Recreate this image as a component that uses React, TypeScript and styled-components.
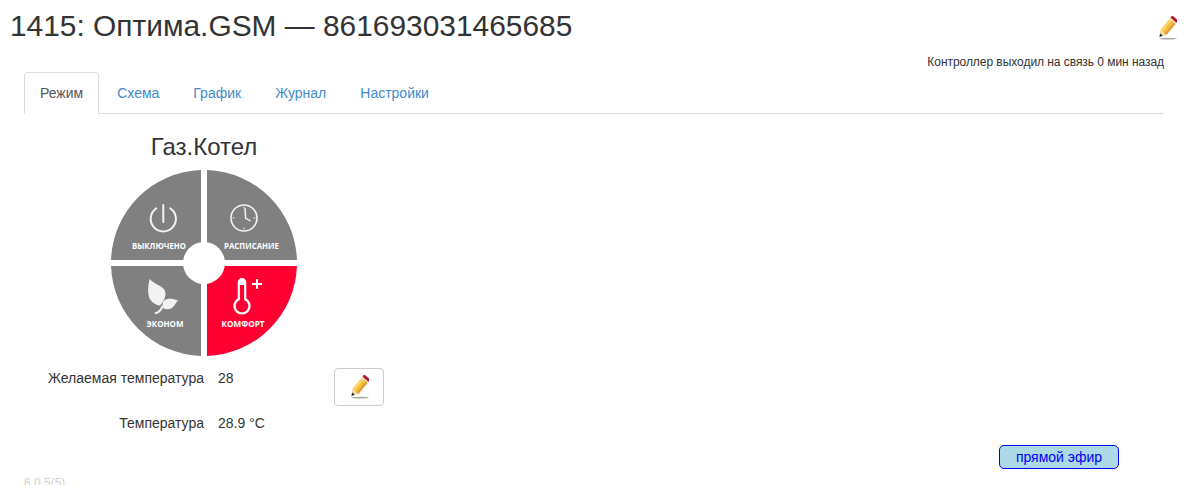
import styled, { createGlobalStyle } from "styled-components"

const GlobalStyle = createGlobalStyle`
    html, body {
        margin: 0;
        padding: 0;
        height: 100%;
        overflow: hidden;
        background: #fff;
    }
    body {
        font-family: "Liberation Sans", Arial, sans-serif;
        font-size: 14px;
        line-height: 20px;
        color: #333;
    }
`

const tabs = ['Режим', 'Схема', 'График', 'Журнал', 'Настройки']

function Pencil() {
    return (
        <PencilSvg viewBox="0 0 20 24">
            <ellipse cx="11" cy="22.600" rx="9" ry="0.900" fill="#a9a9a4" />
            <g transform="rotate(40 10 12)">
                <rect x="6" y="-1" width="8" height="3" rx="0.800" fill="#b3162c" />
                <rect x="6" y="2" width="8" height="1.400" fill="#e2dccb" />
                <path d="M6 3.400h2.600V18H6z" fill="#fbd66a" />
                <path d="M8.600 3.400h2.800V18H8.600z" fill="#f4bd3f" />
                <path d="M11.400 3.400H14V18h-2.600z" fill="#e0a02a" />
                <path d="M6 18h8l-4 5z" fill="#f0dcb4" />
                <path d="M8.200 20.700h3.600l-1.800 3z" fill="#1d1d1d" />
            </g>
        </PencilSvg>
    )
}

function Dial() {
    return (
        <DialSvg viewBox="0 0 186 186">
            <path d="M90 .05A93 93 0 0 0 .05 90H90Z" fill="#808080" />
            <path d="M96 .05A93 93 0 0 1 185.95 90H96Z" fill="#808080" />
            <path d="M90 185.95A93 93 0 0 1 .05 96H90Z" fill="#808080" />
            <path d="M96 185.95A93 93 0 0 0 185.95 96H96Z" fill="#ff0033" />
            <circle cx="93" cy="93" r="21" fill="#fff" />

            <g fill="none" stroke="#f2f2f2" strokeLinecap="round">
                <path d="M45.300 38.400A12.600 12.600 0 1 0 59.300 38.400" strokeWidth="2" />
                <path d="M52.300 35V52" strokeWidth="2" />
                <circle cx="133" cy="48" r="13" strokeWidth="1.600" />
                <path d="M134 38.500L134.700 48.300L139 50.700" strokeWidth="1.500" />
                <path d="M133 37v1.200M133 57.800v1.200M122 48h1.200M142.800 48h1.200" strokeWidth="1" />
            </g>

            <g fill="#f2f2f2">
                <path d="M38.500 109C37 116 36.500 122 38 127C39.500 132 45 135 49 135.500C53 131 55.500 126 54 121C52 116 44 114.500 38.500 109Z" />
                <path d="M67 130.500C61 128 56 128 53 130.500C51 132.500 51.500 136 52 138C55 140 59.500 139.500 62 137C64 135 65 132.500 67 130.500Z" />
                <path d="M43.500 142.500C46.500 142 49 140 50.500 135.500L52.500 136.500C51 141 47.500 144 44 144.300Z" />
            </g>

            <g>
                <path d="M127.800 129.200V112.200a3.200 3.200 0 0 1 6.400 0V129.200a7.500 7.500 0 1 1-6.400 0Z" fill="none" stroke="#fff" strokeWidth="2.200" />
                <path d="M127.800 115V112.200a3.200 3.200 0 0 1 6.400 0V115Z" fill="#fff" />
                <path d="M146 109V119M141 114H151" stroke="#fff" strokeWidth="2" />
            </g>

            <DialLabel x="48" y="78.800" textLength="54" lengthAdjust="spacingAndGlyphs">ВЫКЛЮЧЕНО</DialLabel>
            <DialLabel x="140.500" y="78.800" textLength="55" lengthAdjust="spacingAndGlyphs">РАСПИСАНИЕ</DialLabel>
            <DialLabel x="54" y="157.300" textLength="37" lengthAdjust="spacingAndGlyphs">ЭКОНОМ</DialLabel>
            <DialLabel x="132" y="157.300" textLength="43" lengthAdjust="spacingAndGlyphs">КОМФОРТ</DialLabel>
        </DialSvg>
    )
}

export default function App() {
    return (
        <Page>
            <GlobalStyle />
            <Header>
                <Title>1415: Оптима.GSM — 861693031465685</Title>
                <Pencil />
            </Header>
            <Status>Контроллер выходил на связь 0 мин назад</Status>
            <Tabs>
                {tabs.map((tab, i) => (
                    <Tab key={tab} active={i === 0}>{tab}</Tab>
                ))}
            </Tabs>
            <DialTitle>Газ.Котел</DialTitle>
            <Dial />
            <Params>
                <ParamLabel>Желаемая температура</ParamLabel>
                <ParamValue>28</ParamValue>
                <EditButton><Pencil /></EditButton>
                <ParamLabel>Температура</ParamLabel>
                <ParamValue>28.9 °C</ParamValue>
            </Params>
            <LiveRow>
                <LiveButton>прямой эфир</LiveButton>
            </LiveRow>
            <Version>6.0.5(5)</Version>
        </Page>
    )
}

const Page = styled.div`
    padding: 0 35px 0 24px;
`

const Header = styled.div`
    display: flex;
    align-items: flex-start;
    justify-content: space-between;
    height: 54px;
    margin: 0 -13px 0 -14px;
    padding-top: 4px;
    box-sizing: border-box;
`

const Title = styled.h1`
    margin: 0;
    font-size: 29.900px;
    line-height: 44px;
    font-weight: 400;
    color: #333;
`

const PencilSvg = styled.svg`
    display: block;
    width: 20px;
    height: 24px;
    margin-top: 12px;
    flex: none;
`

const Status = styled.div`
    font-size: 12px;
    line-height: 16px;
    letter-spacing: -0.05px;
    text-align: right;
`

const Tabs = styled.div`
    display: flex;
    gap: 2px;
    height: 41px;
    margin-top: 2px;
    border-bottom: 1px solid #ddd;
`

interface TabProps {
    active: boolean
}

const Tab = styled.a<TabProps>`
    display: block;
    height: 42px;
    box-sizing: border-box;
    padding: 10px 15px 0;
    border: 1px solid ${props => props.active ? '#ddd' : 'transparent'};
    border-bottom-color: ${props => props.active ? '#fff' : 'transparent'};
    border-radius: 4px 4px 0 0;
    background: ${props => props.active ? '#fff' : 'transparent'};
    color: ${props => props.active ? '#555' : '#428bca'};
    cursor: pointer;
`

const DialTitle = styled.div`
    width: 186px;
    margin: 18px 0 0 87px;
    font-size: 24px;
    line-height: 30px;
    text-align: center;
`

const DialSvg = styled.svg`
    display: block;
    width: 186px;
    height: 186px;
    margin: 8px 0 0 87px;
`

const DialLabel = styled.text`
    font-family: "Open Sans", sans-serif;
    font-size: 9px;
    font-weight: 700;
    fill: #fff;
    text-anchor: middle;
`

const Params = styled.div`
    display: grid;
    grid-template-columns: 180px 102px 50px;
    grid-auto-rows: 38px;
    column-gap: 14px;
    row-gap: 7px;
    margin-top: 12px;
`

const ParamLabel = styled.div`
    text-align: right;
`

const ParamValue = styled.div`
    text-align: left;
`

const EditButton = styled.button`
    display: flex;
    align-items: center;
    justify-content: center;
    width: 50px;
    height: 38px;
    padding: 0;
    background: #fff;
    border: 1px solid #ccc;
    border-radius: 4px;

    ${PencilSvg} {
        margin-top: 0;
    }
`

const LiveRow = styled.div`
    display: flex;
    justify-content: flex-end;
    margin: -6px 45px 0 0;
`

const LiveButton = styled.button`
    width: 120px;
    height: 24px;
    padding: 0;
    font-family: "Liberation Sans", Arial, sans-serif;
    font-size: 14px;
    color: #0000ff;
    background: #add8e6;
    border: 1px solid #0000ff;
    border-radius: 5px;
`

const Version = styled.div`
    margin-top: 6px;
    font-size: 12px;
    line-height: 16px;
    color: #d8d0c8;
`
